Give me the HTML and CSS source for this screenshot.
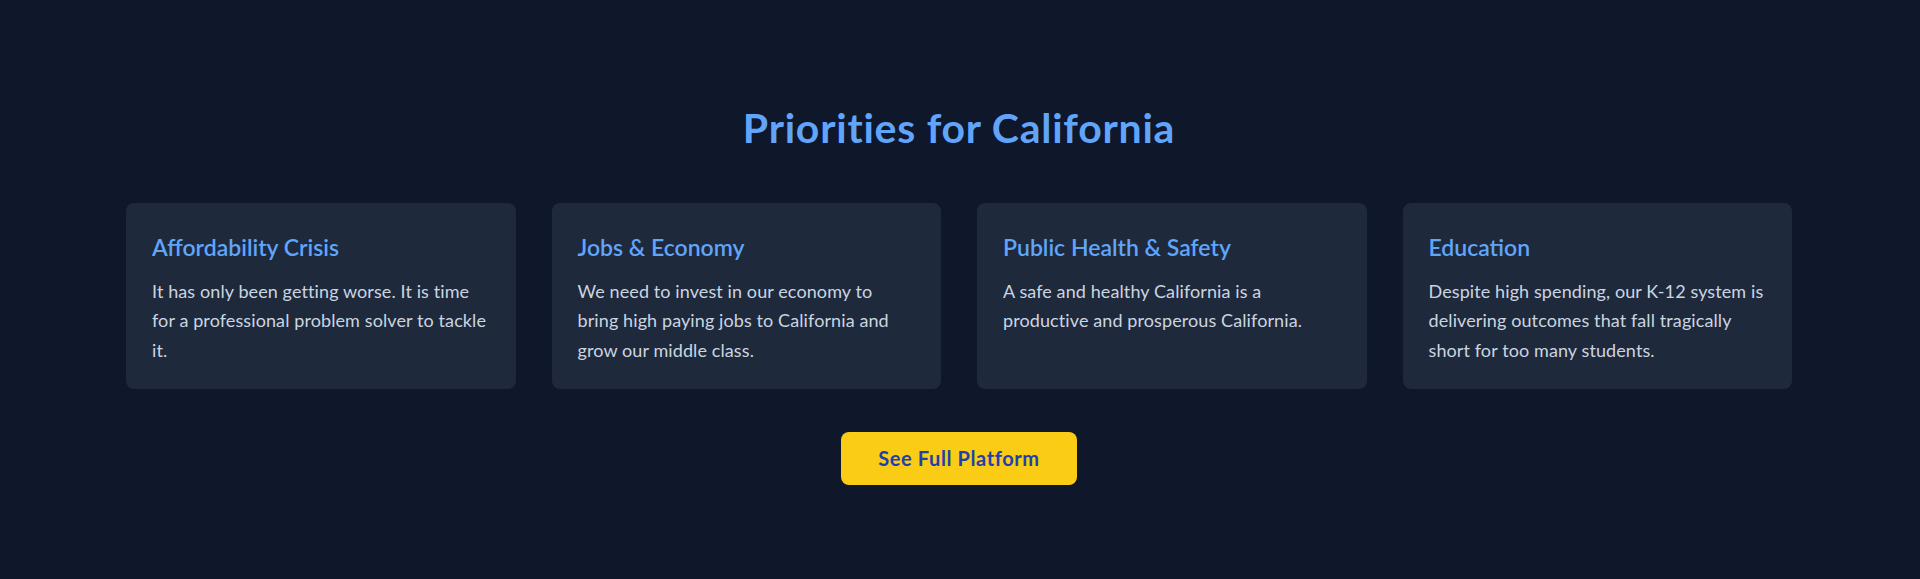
FILE: index.html
```html
<!DOCTYPE html>
<html lang="en">
<head>
<meta charset="utf-8">
<title>Priorities for California</title>
<link rel="stylesheet" href="styles.css">
</head>
<body>
<section class="priorities">
  <h2 class="priorities-title">Priorities for California</h2>
  <div class="cards">
    <div class="card">
      <h3 class="card-title">Affordability Crisis</h3>
      <p class="card-text">It has only been getting worse. It is time for a professional problem solver to tackle it.</p>
    </div>
    <div class="card">
      <h3 class="card-title">Jobs &amp; Economy</h3>
      <p class="card-text">We need to invest in our economy to bring high paying jobs to California and grow our middle class.</p>
    </div>
    <div class="card">
      <h3 class="card-title">Public Health &amp; Safety</h3>
      <p class="card-text">A safe and healthy California is a productive and prosperous California.</p>
    </div>
    <div class="card">
      <h3 class="card-title">Education</h3>
      <p class="card-text">Despite high spending, our K-12 system is delivering outcomes that fall tragically short for too many students.</p>
    </div>
  </div>
  <div class="actions">
    <a class="btn" href="#">See Full Platform</a>
  </div>
</section>
</body>
</html>
```
FILE: styles.css
```css
* { box-sizing: border-box; }
html, body {
  margin: 0;
  padding: 0;
  background: #0f172a;
}
body {
  font-family: Lato, "Noto Sans", sans-serif;
  color: #cbd5e1;
  height: 579px;
}
.priorities {
  padding: 104px 128px 0 126px;
}
.priorities-title {
  margin: 0;
  text-align: center;
  color: #60a5fa;
  font-size: 41px;
  font-weight: 700;
  letter-spacing: 0.75px;
  line-height: 48px;
}
.cards {
  margin-top: 51px;
  display: grid;
  grid-template-columns: repeat(4, 1fr);
  gap: 36px;
}
.card {
  background: #1e293b;
  border-radius: 8px;
  padding: 28px 26px 23px;
  min-height: 186px;
}
.card-title {
  margin: 0 0 14px;
  color: #60a5fa;
  font-size: 23px;
  font-weight: 600;
  line-height: 32px;
}
.card-text {
  margin: 0;
  font-size: 18px;
  letter-spacing: 0.1px;
  line-height: 29.25px;
}
.actions {
  margin-top: 43px;
  display: flex;
  justify-content: center;
}
.btn {
  display: inline-block;
  background: #facc15;
  color: #1e40af;
  font-size: 20px;
  font-weight: 700;
  letter-spacing: 0.6px;
  line-height: 29px;
  padding: 12px 37px;
  border-radius: 8px;
  text-decoration: none;
}
```
